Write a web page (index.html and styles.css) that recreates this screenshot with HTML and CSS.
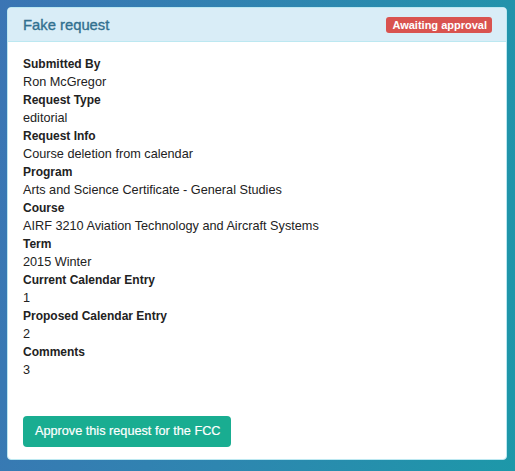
FILE: index.html
```html
<!DOCTYPE html>
<html lang="en">
<head>
<meta charset="utf-8">
<title>Fake request</title>
<link rel="stylesheet" href="styles.css">
</head>
<body>
<div class="panel">
  <div class="panel-heading">
    <h3 class="panel-title">Fake request</h3>
    <span class="label">Awaiting approval</span>
  </div>
  <div class="panel-body">
    <dl class="fields">
      <dt>Submitted By</dt><dd>Ron McGregor</dd>
      <dt>Request Type</dt><dd>editorial</dd>
      <dt>Request Info</dt><dd>Course deletion from calendar</dd>
      <dt>Program</dt><dd>Arts and Science Certificate - General Studies</dd>
      <dt>Course</dt><dd>AIRF 3210 Aviation Technology and Aircraft Systems</dd>
      <dt>Term</dt><dd>2015 Winter</dd>
      <dt>Current Calendar Entry</dt><dd>1</dd>
      <dt>Proposed Calendar Entry</dt><dd>2</dd>
      <dt>Comments</dt><dd>3</dd>
    </dl>
    <button class="btn" type="button">Approve this request for the FCC</button>
  </div>
</div>
</body>
</html>
```
FILE: styles.css
```css
html, body {
  margin: 0;
  height: 100%;
}
body {
  padding: 7px 8px 7px 7px;
  box-sizing: border-box;
  background: linear-gradient(100deg, #3b75b4 0%, #2e86b0 50%, #1d98a9 100%);
  font-family: "Liberation Sans", Arial, sans-serif;
  color: #333;
}
.panel {
  background: #fff;
  border: 1px solid #bce8f1;
  border-radius: 4px;
  overflow: hidden;
}
.panel-heading {
  display: flex;
  align-items: center;
  justify-content: space-between;
  height: 33px;
  padding: 0 14px 0 15px;
  background: #d9edf7;
  border-bottom: 1px solid #bce8f1;
}
.panel-title {
  margin: 0;
  font-size: 14.8px;
  font-weight: normal;
  color: #31708f;
  line-height: 18px;
  padding-top: 1px;
  -webkit-text-stroke: 0.35px #31708f;
}
.label {
  display: inline-block;
  background: #d9534f;
  color: #fff;
  font-size: 11px;
  font-weight: bold;
  line-height: 16px;
  height: 16px;
  padding: 0 5px 0 6px;
  border-radius: 3px;
}
.panel-body {
  padding: 13px 15px 12px;
}
.fields {
  margin: 0;
  font-size: 12px;
  line-height: 18px;
}
.fields dt {
  font-weight: bold;
  color: #222;
}
.fields dd {
  margin: 0;
  font-size: 12.7px;
  color: #222;
}
.btn {
  margin-top: 37px;
  display: block;
  height: 31px;
  padding: 0 11px 0 12px;
  border: 0;
  border-radius: 4px;
  background: #19ad91;
  color: #fff;
  font-family: "Liberation Sans", Arial, sans-serif;
  font-size: 12.7px;
  line-height: 31px;
  -webkit-text-stroke: 0.2px #fff;
}
```
